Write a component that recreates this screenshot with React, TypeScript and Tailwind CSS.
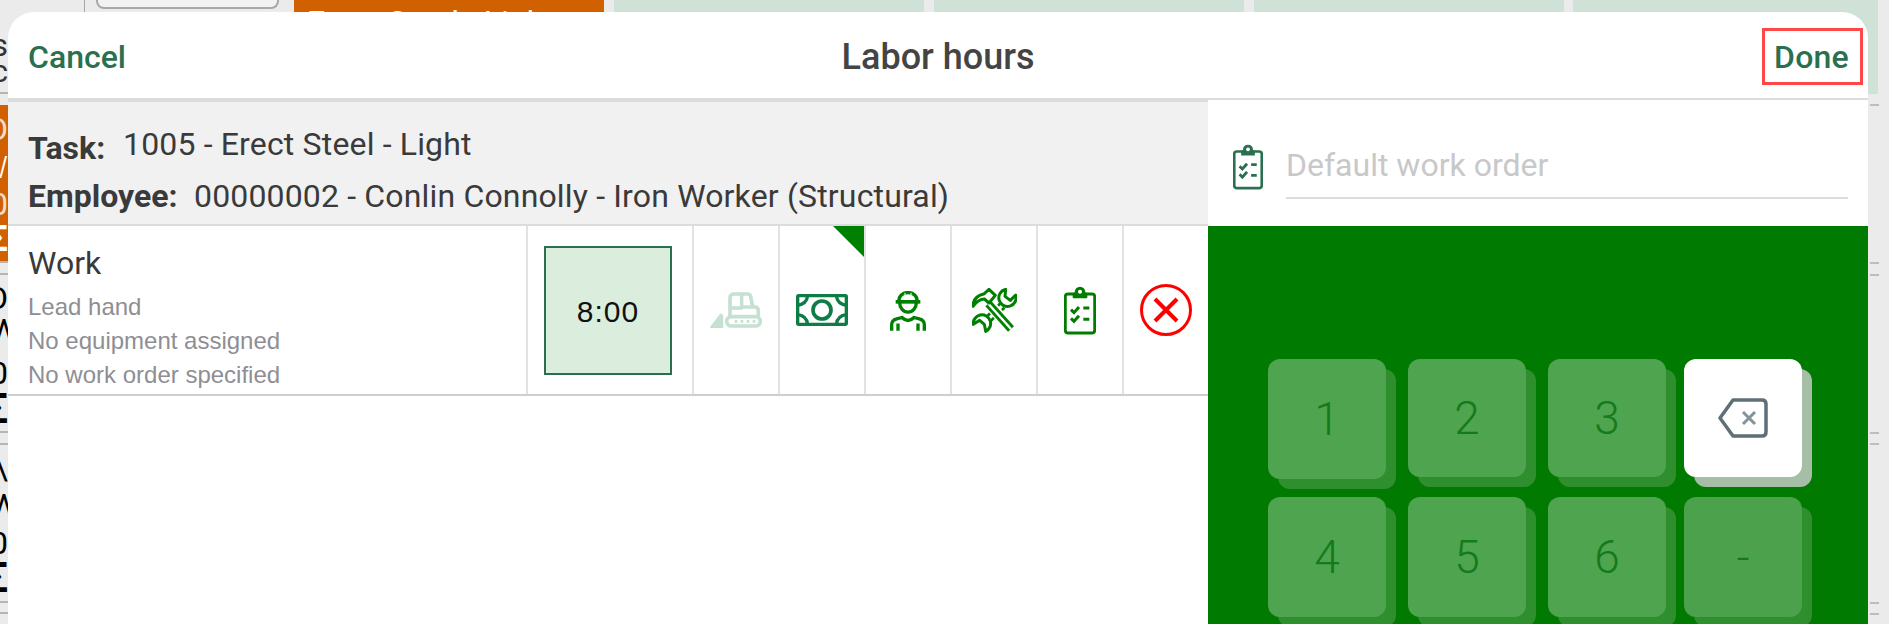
import React from "react";

const roboto = "font-['Roboto',sans-serif]";

function Bulldozer() {
  return (
    <svg width="52" height="36" viewBox="30 40 156 108" fill="none" stroke="#c6e0d2" strokeWidth="11" strokeLinejoin="round">
      <path d="M30 146 L60 106 Q69 102 69 114 V148 H34 Q29 148 30 146 Z" fill="#c6e0d2" strokeWidth="1" />
      <rect x="80" y="114" width="101" height="28" rx="14" />
      <path d="M90 112 V58 Q90 46 102 46 H143 Q150 46 152 54 L158 85 H164 Q175 85 175 97 V112" />
      <path d="M92 88 H125 V48" strokeWidth="10" />
      <path d="M125 85 H158" strokeWidth="10" />
      <path d="M104 128 H112 M122 128 H130 M140 128 H148 M158 128 H166" strokeWidth="8" />
    </svg>
  );
}

function Money() {
  return (
    <svg width="52" height="32" viewBox="288 45 156 96" fill="none" stroke="#0e7c45" strokeWidth="10">
      <rect x="293" y="50" width="146" height="86" rx="3" />
      <circle cx="366" cy="93" r="27" strokeWidth="11" />
      <path d="M323 50 Q320 76 292 79 M409 50 Q412 76 440 79 M323 136 Q320 110 292 107 M409 136 Q412 110 440 107" strokeWidth="10" />
    </svg>
  );
}

function Worker() {
  return (
    <svg width="36" height="40" viewBox="570 33 108 119" fill="none" stroke="#008000" strokeWidth="10" className="mt-[2px]">
      <path d="M597 60 A27 23 0 0 1 651 60" />
      <path d="M587 65 H661" strokeWidth="11" />
      <path d="M599 68 A25 28 0 0 0 649 68" />
      <path d="M615 38 V52 M633 38 V52" stroke="#ffffff" strokeWidth="3" />
      <path d="M575 152 V134 Q575 120 590 116 L606 112 Q624 130 642 112 L658 116 Q673 120 673 134 V152" />
      <path d="M594 130 V152 M654 130 V152" />
    </svg>
  );
}

function Tools() {
  return (
    <svg width="45" height="45" viewBox="35 25 135 135" fill="none" stroke="#008000" strokeWidth="9" strokeLinejoin="round">
      <path d="M126 78 L74 128" strokeWidth="26" />
      <path d="M126 78 L74 128" stroke="#ffffff" strokeWidth="9" />
      <path d="M166 46 A26 26 0 1 1 136 29 L134 50 L150 62 Z" fill="#ffffff" />
      <path d="M39 134 A26 26 0 1 1 76 155 L72 134 L58 122 Z" fill="#ffffff" />
      <path d="M86 72 L150 146" stroke="#ffffff" strokeWidth="34" />
      <path d="M84 72 L152 148" strokeWidth="24" />
      <path d="M84 72 L152 148" stroke="#ffffff" strokeWidth="7" />
      <path d="M38 80 Q38 50 72 42 L86 29 L105 47 L86 70 L72 58 Q54 58 38 80 Z" fill="#ffffff" />
    </svg>
  );
}

function Clipboard({ color, w, h }: { color: string; w: number; h: number }) {
  return (
    <svg width={w} height={h} viewBox="312 22 96 143" fill="none" stroke={color} strokeWidth="8.500">
      <rect x="316" y="44" width="88" height="117" rx="8" />
      <circle cx="360" cy="38" r="16" fill={color} stroke="none" />
      <rect x="338" y="40" width="44" height="17" rx="3" fill={color} stroke="none" />
      <circle cx="360" cy="37" r="6" fill="#ffffff" stroke="none" />
      <path d="M333 91 L342 100 L357 83 M333 117 L342 126 L357 109" strokeWidth="9" />
      <path d="M370 86 H388 M370 120 H388" strokeWidth="9" />
    </svg>
  );
}

function XCircle() {
  return (
    <svg width="52" height="52" viewBox="0 0 52 52" fill="none" stroke="#ff0000">
      <circle cx="26" cy="26" r="24.500" strokeWidth="3" />
      <path d="M15 15 L37 37 M37 15 L15 37" strokeWidth="4" />
    </svg>
  );
}

function Backspace() {
  return (
    <svg width="50" height="40" viewBox="0 0 50 40" fill="none">
      <path d="M15 2 H44 Q48 2 48 6 V34 Q48 38 44 38 H15 L2 20 Z" stroke="#5f6f77" strokeWidth="3.500" strokeLinejoin="round" />
      <path d="M25 14 L37 26 M37 14 L25 26" stroke="#84929a" strokeWidth="3" />
    </svg>
  );
}

function Key({ children, ml, h = "h-[118px]", bg = "bg-[#4fa54f]", shadow = "shadow-[10px_10px_0_#2f8f2f]" }: { children: React.ReactNode; ml: string; h?: string; bg?: string; shadow?: string }) {
  return (
    <div className={`w-[118px] ${h} ${ml} ${bg} ${shadow} rounded-[12px] flex items-center justify-center text-[46px] font-light leading-none text-[#147a1c]`}>
      {children}
    </div>
  );
}

function IconCell({ children, last }: { children: React.ReactNode; last?: boolean }) {
  return (
    <div className={last ? "w-[84px] flex items-center justify-center" : "w-[86px] border-r-2 border-[#e2e2e2] flex items-center justify-center"}>
      {children}
    </div>
  );
}

function Frag({ mt, cls = "text-black", text, size = "text-[32px]", shift = "" }: { mt: string; cls?: string; text: string; size?: string; shift?: string }) {
  return (
    <div className={`${mt} h-[24px] flex items-center justify-end overflow-x-clip ${size} leading-none ${cls}`}>
      <span className={`shrink-0 ${shift}`}>{text}</span>
    </div>
  );
}

function Tick({ mt }: { mt: string }) {
  return <div className={`${mt} h-[2px] bg-[#bdbdbd] w-full`} />;
}

export default function App() {
  return (
    <div className={`relative w-[1889px] h-[624px] overflow-hidden bg-[#ebebeb] flex ${roboto}`}>
      {/* page behind the sheet */}
      <div className="w-[8px] shrink-0 flex flex-col">
        <Frag mt="mt-[33px]" text="as" cls="text-[#333333]" />
        <Frag mt="mt-[2px]" text="c" cls="text-[#333333]" />
        <div className="mt-[9px] h-[2px] bg-[#b5b5b5]" />
        <div className="mt-[11px] h-[156px] bg-[#d06000] flex flex-col">
          <Frag mt="mt-[12px]" text="O" cls="text-[#f4dcc8]" />
          <Frag mt="mt-[14px]" text="W" cls="text-white font-light" />
          <Frag mt="mt-[13px]" text="0" cls="text-[#f4dcc8]" />
          <Frag mt="mt-[11px]" text="Σ" cls="text-white font-bold" size="text-[36px]" />
        </div>
        <div className="h-[2px] bg-[#b5b5b5]" />
        <div className="mt-[10px] h-[2px] bg-[#b5b5b5]" />
        <Frag mt="mt-[11px]" text="O" />
        <Frag mt="mt-[8px]" text="W" shift="mr-[-10px]" />
        <Frag mt="mt-[19px]" text="0" />
        <Frag mt="mt-[12px]" text="Σ" cls="font-bold" size="text-[42px]" />
        <div className="mt-[10px] h-[2px] bg-[#b5b5b5]" />
        <div className="mt-[10px] h-[2px] bg-[#b5b5b5]" />
        <Frag mt="mt-[11px]" text="\" />
        <Frag mt="mt-[13px]" text="W" shift="mr-[-10px]" />
        <Frag mt="mt-[14px]" text="0" />
        <Frag mt="mt-[11px]" text="Σ" cls="font-bold" size="text-[42px]" />
        <div className="mt-[11px] h-[2px] bg-[#b5b5b5]" />
        <div className="mt-[9px] h-[2px] bg-[#b5b5b5]" />
      </div>

      <div className="flex-1 flex flex-col">
        <div className="h-[94px] flex items-start">
          <div className="ml-[76px] w-[1px] h-[12px] bg-[#a8a8a8]" />
          <div className="ml-[11px] w-[183px] h-[9px] border-2 border-t-0 border-[#a8a8a8] rounded-b-[8px] bg-[#f2f2f2]" />
          <div className="ml-[15px] w-[310px] h-[94px] bg-[#d06000] pl-[13px] pt-[4px] text-[32px] leading-[36px] text-white whitespace-nowrap overflow-hidden">Erect Steel - Light</div>
          <div className="ml-[10px] w-[310px] h-[94px] bg-[#d0e2d8]" />
          <div className="ml-[10px] w-[310px] h-[94px] bg-[#d0e2d8]" />
          <div className="ml-[10px] w-[310px] h-[94px] bg-[#d0e2d8]" />
          <div className="ml-[9px] w-[305px] h-[94px] bg-[#d0e2d8]" />
        </div>
        <div className="ml-auto w-[19px] pr-[10px] flex flex-col">
          <Tick mt="mt-[10px]" />
          <Tick mt="mt-[156px]" />
          <Tick mt="mt-[10px]" />
          <Tick mt="mt-[156px]" />
          <Tick mt="mt-[9px]" />
          <Tick mt="mt-[157px]" />
          <Tick mt="mt-[9px]" />
        </div>
      </div>

      {/* modal sheet */}
      <div className="absolute left-[8px] top-[12px] w-[1860px] h-[612px] bg-white rounded-t-[26px] overflow-hidden flex flex-col text-[#3a3a3a]">
        <div className="relative h-[88px] shrink-0 border-b-2 border-[#dcdcdc] flex items-center justify-between pl-[20px] pr-[5px]">
          <div className="text-[32px] font-medium text-[#2a7050] leading-[36px] mt-[3px]">Cancel</div>
          <div className="absolute left-0 right-0 top-0 bottom-0 flex items-center justify-center pointer-events-none">
            <div className="text-[36px] font-medium text-[#444444] leading-[40px] mt-[4px]">Labor hours</div>
          </div>
          <div className="w-[101px] h-[57px] mt-[3px] border-[3px] border-[#ff4747] pr-[2px] flex items-center justify-center text-[32px] font-medium text-[#2a7050] leading-[36px] tracking-[0.2px]">Done</div>
        </div>

        <div className="flex flex-1 min-h-0">
          <div className="w-[1200px] flex flex-col">
            <div className="h-[126px] bg-[#f1f1f1] border-t-2 border-b-2 border-[#dcdcdc] pl-[20px] pt-[24px] text-[32px] leading-[36px]">
              <div className="flex items-start">
                <span className="font-bold mt-[4px] w-[95px]">Task:</span>
                <span className="tracking-[0.16px]">1005 - Erect Steel - Light</span>
              </div>
              <div className="flex items-start mt-[12px]">
                <span className="font-bold w-[166px]">Employee:</span>
                <span className="tracking-[0.16px]">00000002 - Conlin Connolly - Iron Worker (Structural)</span>
              </div>
            </div>
            <div className="h-[170px] flex border-b-2 border-[#cfcfcf]">
              <div className="flex-1 border-r-2 border-[#e2e2e2] pl-[20px] pt-[19px]">
                <div className="text-[32px] leading-[36px]">Work</div>
                <div className="mt-[9px] font-['Liberation_Sans',sans-serif] text-[24px] leading-[34px] text-[#8e8e93]">
                  <div>Lead hand</div>
                  <div>No equipment assigned</div>
                  <div>No work order specified</div>
                </div>
              </div>
              <div className="w-[166px] border-r-2 border-[#e2e2e2] flex items-center pl-[16px]">
                <div className="w-[128px] h-[129px] border-2 border-[#2a7050] bg-[#dbeddc] flex items-center justify-center pt-[2px] font-['Liberation_Sans',sans-serif] text-[30px] tracking-[1px] text-[#111111]">8:00</div>
              </div>
              <IconCell><Bulldozer /></IconCell>
              <div className="relative w-[86px] border-r-2 border-[#e2e2e2] flex items-center justify-center">
                <Money />
                <div className="absolute right-0 top-0 w-0 h-0 border-t-[31px] border-l-[31px] border-t-[#008000] border-l-transparent" />
              </div>
              <IconCell><Worker /></IconCell>
              <IconCell><Tools /></IconCell>
              <IconCell><Clipboard color="#007d00" w={32} h={49} /></IconCell>
              <IconCell last><XCircle /></IconCell>
            </div>
          </div>

          <div className="flex-1 flex flex-col min-w-0">
            <div className="h-[126px] flex pl-[25px] pr-[20px]">
              <div className="mt-[44px]"><Clipboard color="#2a7050" w={30} h={46} /></div>
              <div className="flex-1 ml-[23px] mt-[29px] h-[70px] border-b-2 border-[#dcdcdc] text-[32px] leading-[44px] text-[#c8c8c8] pt-[14px]">Default work order</div>
            </div>
            <div className="flex-1 bg-[#007a00] pl-[60px] pt-[133px] overflow-hidden">
              <div className="h-[138px] flex items-start">
                <Key ml="" h="h-[120px]">1</Key>
                <Key ml="ml-[22px]">2</Key>
                <Key ml="ml-[22px]">3</Key>
                <Key ml="ml-[18px]" bg="bg-white" shadow="shadow-[10px_10px_0_#a6bda6]"><Backspace /></Key>
              </div>
              <div className="flex items-start">
                <Key ml="" h="h-[120px]">4</Key>
                <Key ml="ml-[22px]" h="h-[120px]">5</Key>
                <Key ml="ml-[22px]" h="h-[120px]">6</Key>
                <Key ml="ml-[18px]" h="h-[120px]" bg="bg-[#4ca24c]">-</Key>
              </div>
            </div>
          </div>
        </div>
      </div>
    </div>
  );
}
